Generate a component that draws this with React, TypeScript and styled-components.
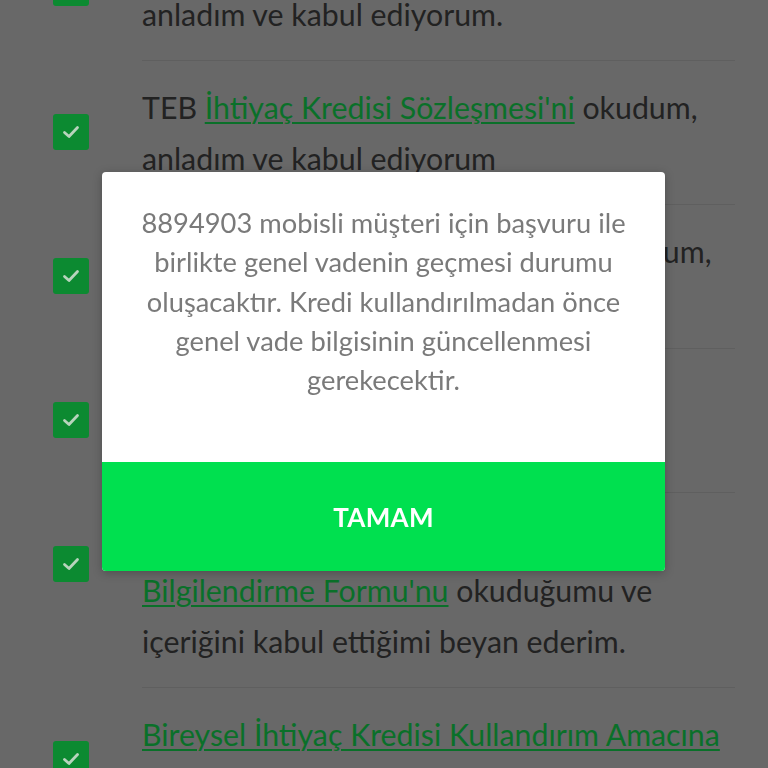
import { FC, ReactNode } from "react";
import styled, { createGlobalStyle } from "styled-components";

const GlobalStyle = createGlobalStyle`
  html, body {
    margin: 0;
    padding: 0;
    background: #686868;
  }
  body {
    font-family: Lato, "Noto Sans", sans-serif;
    overflow: hidden;
  }
`;

const Screen = styled.div`
  width: 768px;
  height: 768px;
  overflow: hidden;
  background: #686868;
`;

const List = styled.ul`
  list-style: none;
  margin: -83px 0 0;
  padding: 0 33px 0 53px;
`;

const Item = styled.li`
  display: flex;
  align-items: flex-start;
  gap: 53px;
`;

const Check = styled.span`
  flex: none;
  width: 36px;
  height: 36px;
  margin-top: 53px;
  border-radius: 3px;
  background: #0c8a31;
  display: flex;
  align-items: center;
  justify-content: center;
`;

const Body = styled.p`
  flex: 1;
  margin: 0;
  padding: 21px 0 20px;
  border-bottom: 1px solid #5f5f5f;
  font-size: 30.3px;
  line-height: 51px;
  color: #222;
`;

const Link = styled.a`
  color: #0a7029;
  text-decoration: underline;
  text-decoration-thickness: 2px;
  text-underline-offset: 3px;
`;

const Dialog = styled.div`
  position: fixed;
  top: 172px;
  left: 102px;
  width: 563px;
  background: #fff;
  border-radius: 4px;
  overflow: hidden;
  box-shadow: 0 2px 10px rgba(0, 0, 0, 0.25);
`;

const Message = styled.p`
  margin: 0;
  padding: 31px 26px 63px;
  text-align: center;
  font-size: 27.3px;
  line-height: 39.3px;
  color: #7a7a7a;
`;

const OkButton = styled.button`
  display: block;
  width: 100%;
  height: 109px;
  border: none;
  background: #00e04f;
  color: #fff;
  font-family: Lato, "Noto Sans", sans-serif;
  font-weight: 700;
  font-size: 26px;
  letter-spacing: 0.3px;
  cursor: pointer;
`;

const CheckMark = () => (
  <svg width="22" height="22" viewBox="0 0 22 22" fill="none">
    <path
      d="M4.5 11.5 L9 15.5 L17.5 6.5"
      stroke="#b8d4bd"
      strokeWidth="2.8"
      strokeLinecap="round"
      strokeLinejoin="round"
    />
  </svg>
);

const Consent: FC<{ children: ReactNode }> = ({ children }) => (
  <Item>
    <Check>
      <CheckMark />
    </Check>
    <Body>{children}</Body>
  </Item>
);

export default function App() {
  return (
    <Screen>
      <GlobalStyle />
      <List>
        <Consent>
          TEB <Link>Ön Bilgi Formu'nu</Link> okudum,
          <br />
          anladım ve kabul ediyorum.
        </Consent>
        <Consent>
          TEB <Link>İhtiyaç Kredisi Sözleşmesi'ni</Link> okudum, anladım ve
          kabul ediyorum
        </Consent>
        <Consent>
          TEB <Link>Kredi Sigortası Bilgi Formunu</Link> okudum, anladım ve
          kabul ediyorum.
        </Consent>
        <Consent>
          <Link>Kampanya Şartları'nı</Link> okudum,
          <br />
          anladım ve kabul ediyorum.
        </Consent>
        <Consent>
          <Link>Tüketici Kredisi Sözleşme Öncesi Bilgilendirme Formu'nu</Link>{" "}
          okuduğumu ve içeriğini kabul ettiğimi beyan ederim.
        </Consent>
        <Consent>
          <Link>Bireysel İhtiyaç Kredisi Kullandırım Amacına</Link> İlişkin
          Beyan'ı okudum ve kabul ediyorum.
        </Consent>
      </List>
      <Dialog>
        <Message>
          8894903 mobisli müşteri için başvuru ile birlikte genel vadenin
          geçmesi durumu oluşacaktır. Kredi kullandırılmadan önce genel vade
          bilgisinin güncellenmesi gerekecektir.
        </Message>
        <OkButton>TAMAM</OkButton>
      </Dialog>
    </Screen>
  );
}
